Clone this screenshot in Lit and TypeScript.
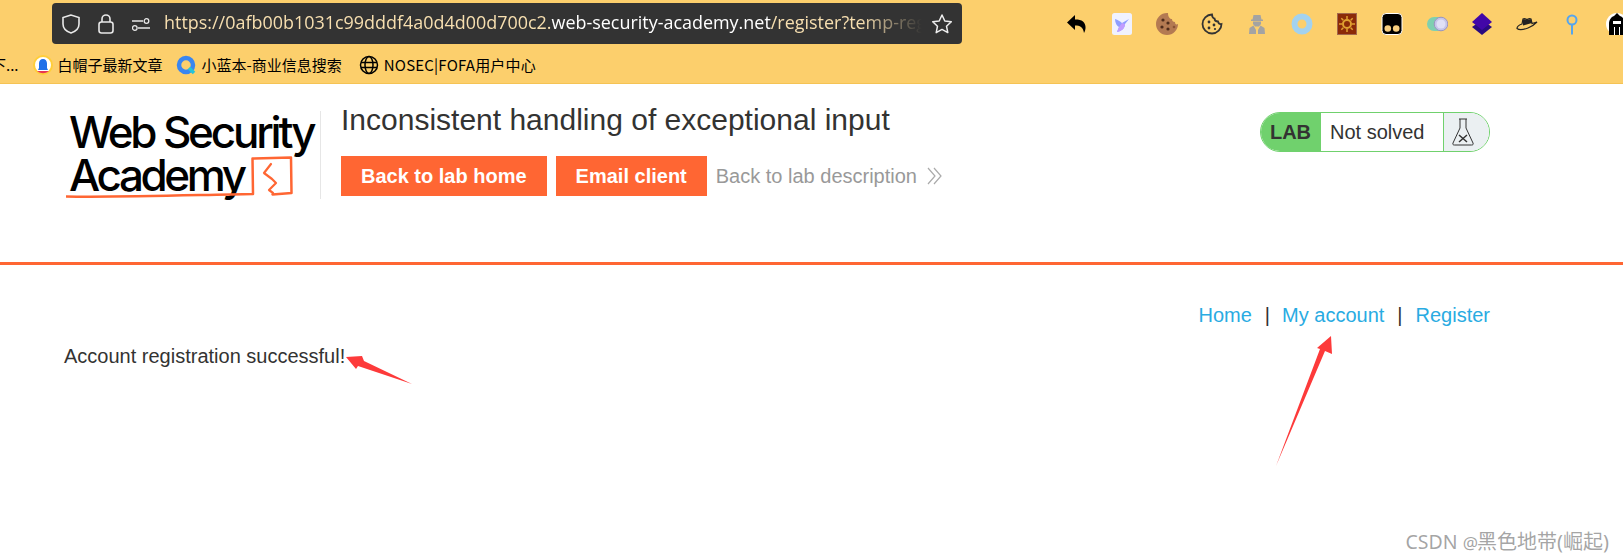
import { LitElement, html, css, svg } from "lit";
import { customElement } from "lit/decorators.js";

const extIcons = [
  svg`<path d="M9 2 1 9.500l8 7.500v-4.500c5 0 8 1.500 9 7.500 2-3 2.500-8.500-1-11.500-2-1.500-4-2-8-2z" fill="#000"/>`,
  svg`<rect x="1" y="0" width="20" height="22" rx="2.500" fill="#f0f2fe"/><path d="M4 6c3 1 5 2 7 4l7-4-4 5c0 4-3 7-8 8l2-5c-2-1-4-4-4-8z" fill="#8e9dff"/><path d="M11 10l3 1c0 4-3 7-8 8l2-5z" fill="#c09cff"/>`,
  svg`<path d="M11 0a11 11 0 1 0 11 11c-2 1-3 0-3-2-2 0-3-1-3-3-2 0-4-2-4-6z" fill="#b47a52"/><circle cx="7" cy="7" r="1.600" fill="#4f2c1b"/><circle cx="12" cy="10" r="1.600" fill="#4f2c1b"/><circle cx="6" cy="14" r="1.600" fill="#4f2c1b"/><circle cx="12" cy="16" r="1.600" fill="#4f2c1b"/><circle cx="18" cy="14" r="1.300" fill="#8a5434"/>`,
  svg`<path d="M11 1.500a9.500 9.500 0 1 0 9.500 9.500c-2 .5-3-.5-3.500-2.500-2 0-3.500-1-3.500-3-1.500-.5-2.500-2-2.500-4z" fill="none" stroke="#333" stroke-width="1.800"/><circle cx="8" cy="9" r="1.400" fill="#333"/><circle cx="13" cy="12" r="1.400" fill="#333"/><circle cx="8" cy="15" r="1.400" fill="#333"/><circle cx="14" cy="16" r="1.100" fill="#333"/>`,
  svg`<path d="M7.500 2h7l1 4.500H17V8H5V6.500h1.500zM7 8.500h8V11l-2 2.500H9L7 11zM3 21l.5-6 4-2.500L10 17v4zM19 21l-.5-6-4-2.500L12 17v4z" fill="#a3a3a3"/>`,
  svg`<circle cx="11" cy="11" r="7.500" fill="none" stroke="#a3d2ef" stroke-width="6"/>`,
  svg`<rect x="1.500" y="0.500" width="19" height="21" fill="#8c2a08" stroke="#a2674d"/><circle cx="11" cy="11" r="4" fill="none" stroke="#e0a030" stroke-width="2"/><path d="M11 3v3M11 16v3M3 11h3M16 11h3M5.300 5.300l2 2M14.700 14.700l2 2M16.700 5.300l-2 2M7.300 14.700l-2 2" stroke="#e0a030" stroke-width="1.500"/>`,
  svg`<rect x="1" y="0.500" width="20" height="21" rx="4" fill="#000" stroke="#fff"/><circle cx="6.800" cy="15.500" r="3.300" fill="#f8cf80"/><circle cx="15.200" cy="15.500" r="3.300" fill="#f8cf80"/>`,
  svg`<rect x="1" y="4" width="20" height="14" rx="7" fill="#7fd0b0"/><circle cx="15" cy="11" r="6.800" fill="#c5c5ea" stroke="#9c95bf"/><circle cx="15" cy="11" r="4.500" fill="#e0e0f6"/>`,
  svg`<path d="M11 7 21 14l-10 8-10-8z" fill="#2a0a80"/><path d="M11 0 21 9l-10 8L1 9z" fill="#4207a8"/>`,
  svg`<path d="M1 15.500c3 2.500 7 1 11-.5 3-1 6-3 9-6l-5 1.500-1-4.500c-2-1-3 .5-4 .5s-2-1.500-4-.5L6 11c-3 1-5 3-5 4.500z" fill="none" stroke="#222" stroke-width="1.200"/><path d="M7 6.500c2-1 3 .5 4 .5s2-1.500 4-.5l1 3.500-9 2.500z" fill="#222"/>`,
  svg`<circle cx="11" cy="7" r="4.500" fill="none" stroke="#55a5ee" stroke-width="2"/><rect x="10" y="11.500" width="2" height="10" fill="#55a5ee"/>`,
  svg`<circle cx="11" cy="11" r="11" fill="#fff"/><path d="M11 0l3 3c3 1 5 4 5 8v11H3V11c0-4 2-7 5-8z" fill="#000"/><path d="M7 8h8v3H7z" fill="#fff"/><path d="M8 14h1v8H8zM13 14h1v8h-1z" fill="#fff"/>`,
];

@customElement("app-root")
export class AppRoot extends LitElement {
  static styles = css`
    :host {
      display: block;
      position: relative;
      width: 1623px;
      height: 560px;
      overflow: hidden;
      background: #fff;
      font-family: "Liberation Sans", Arial, sans-serif;
      color: #333332;
    }
    .chrome {
      height: 84px;
      background: #fccf6c;
      border-bottom: 1px solid #f5c354;
      box-sizing: border-box;
      display: flex;
      flex-direction: column;
    }
    .top {
      height: 50px;
      display: flex;
      align-items: flex-start;
      padding: 3px 0 0 52px;
      box-sizing: border-box;
    }
    .url {
      width: 910px;
      height: 41px;
      background: #333333;
      border-radius: 4px;
      display: flex;
      align-items: center;
      box-sizing: border-box;
      padding-left: 9px;
      flex: none;
    }
    .url svg { flex: none; }
    .sec { display: flex; align-items: center; margin-right: 14px; }
    .sec svg + svg { margin-left: 16px; }
    .sec svg + svg + svg { margin-left: 17px; }
    .addr {
      font-family: "Open Sans", "Noto Sans", sans-serif;
      font-size: 17.950px;
      line-height: 38px;
      height: 41px;
      white-space: nowrap;
      overflow: hidden;
      width: 758px;
      color: #f7dfb0;
      -webkit-mask-image: linear-gradient(90deg, #000 92%, transparent 100%);
      mask-image: linear-gradient(90deg, #000 92%, transparent 100%);
    }
    .addr b { font-weight: 400; color: #fff; }
    .star { margin-left: 9px; }
    .exts {
      display: flex;
      gap: 23px;
      margin-left: 104px;
      margin-top: 10px;
      flex: none;
    }
    .exts svg { display: block; flex: none; }
    .marks {
      display: flex;
      align-items: center;
      height: 29px;
      font-family: "Noto Sans CJK SC", "Noto Sans", sans-serif;
      font-size: 15px;
      color: #000;
      white-space: nowrap;
      margin-left: -9px;
    }
    .mark { display: flex; align-items: center; gap: 5px; margin-right: 13px; }
    .mark svg { flex: none; }
    .m0 { margin-right: 14px; }
    .m2 { gap: 6px; margin-right: 17px; }
    .latin { letter-spacing: 0.200px; }
    .head {
      height: 181px;
      box-sizing: border-box;
      border-bottom: 3px solid #ff6633;
      display: flex;
      padding: 27px 133px 0 66px;
    }
    .logo {
      width: 255px;
      height: 88px;
      border-right: 1px solid #e6e6e6;
      position: relative;
      color: #000;
      flex: none;
      box-sizing: border-box;
      line-height: 1;
      font-family: "Inter", "Liberation Sans", sans-serif;
      font-weight: 450;
    }
    .logo .l1, .logo .l2 { display: block; white-space: nowrap; font-size: 44px; }
    .logo .l1 { letter-spacing: -3.200px; margin-left: 3px; height: 43px; line-height: 43px; }
    .logo .l2 { letter-spacing: -3.400px; margin-left: 3px; height: 43px; line-height: 43px; }
    .logo svg { position: absolute; left: 0; top: 0; }
    .titles { margin-left: 20px; }
    h2 {
      margin: -8px 0 0;
      font-size: 30px;
      font-weight: 400;
      line-height: 34px;
      white-space: nowrap;
      color: #333332;
    }
    .btns { display: flex; align-items: center; margin-top: 19px; }
    .btn {
      height: 40px;
      line-height: 40px;
      background: #ff6633;
      color: #fff;
      font-weight: 700;
      font-size: 20px;
      padding: 0 20px;
      margin-right: 9px;
      white-space: nowrap;
    }
    .back { color: #999; font-size: 20px; white-space: nowrap; display: flex; align-items: center; gap: 10px; }
    .lab {
      margin-left: auto;
      margin-top: 1px;
      width: 230px;
      height: 40px;
      box-sizing: border-box;
      border: 1px solid #70d16d;
      border-radius: 20px;
      display: flex;
      overflow: hidden;
      font-size: 20px;
      flex: none;
    }
    .lab .tag {
      width: 60px;
      background: #70d16d;
      font-weight: 700;
      text-align: center;
      line-height: 38px;
      flex: none;
      box-sizing: border-box;
      padding-right: 1px;
      color: #333332;
    }
    .lab .st {
      flex: 1;
      line-height: 38px;
      padding-left: 9px;
      border-right: 1px solid #70d16d;
    }
    .lab .ic {
      width: 45px;
      background: #ebf0f2;
      display: flex;
      align-items: center;
      padding-left: 7px;
      box-sizing: border-box;
    }
    .body { padding: 0 133px 0 64px; font-size: 20px; }
    .nav {
      display: flex;
      justify-content: flex-end;
      gap: 13px;
      padding-top: 39px;
      line-height: 23px;
    }
    .nav a { color: #29abe2; }
    .tight { margin-right: -1px; }
    .msg { margin: 18px 0 0; line-height: 23px; }
    .over { position: absolute; left: 0; top: 0; pointer-events: none; }
    .wm {
      position: absolute;
      right: 14px;
      top: 526px;
      font-family: "Noto Sans", "Noto Sans CJK SC", sans-serif;
      font-size: 19.500px;
      color: rgba(125, 125, 125, 0.7);
      white-space: nowrap;
    }
    .wm .at { font-size: 17px; letter-spacing: -1px; }
    .wm .cjk { font-size: 20px; }
  `;

  render() {
    return html`
      <div class="chrome">
        <div class="top">
          <div class="url">
            <div class="sec">
              <svg width="20" height="22" viewBox="0 0 20 22"><path d="M10 2 2 4.500V11c0 4.500 3.500 7.500 8 9 4.500-1.500 8-4.500 8-9V4.500z" fill="none" stroke="#e8e8e8" stroke-width="1.600"/></svg>
              <svg width="18" height="22" viewBox="0 0 18 22"><rect x="2" y="9" width="14" height="11" rx="2.500" fill="none" stroke="#e8e8e8" stroke-width="1.600"/><path d="M5 9V6a4 4 0 0 1 8 0v3" fill="none" stroke="#e8e8e8" stroke-width="1.600"/></svg>
              <svg width="18" height="14" viewBox="0 0 18 14"><path d="M0 4h11M6 11h12" stroke="#e8e8e8" stroke-width="1.400"/><circle cx="14.500" cy="4" r="2.300" fill="none" stroke="#e8e8e8" stroke-width="1.300"/><circle cx="2.800" cy="11" r="2.300" fill="none" stroke="#e8e8e8" stroke-width="1.300"/></svg>
            </div>
            <div class="addr">https://0afb00b1031c99dddf4a0d4d00d700c2.<b>web-security-academy.net</b>/register?temp-registration-token=x</div>
            <svg class="star" width="22" height="22" viewBox="0 0 22 22"><path d="M11 2l2.800 6 6.500.8-4.800 4.400 1.300 6.400L11 16.400 5.200 19.600l1.300-6.400L1.700 8.800 8.200 8z" fill="none" stroke="#eee" stroke-width="1.500" stroke-linejoin="round"/></svg>
          </div>
          <div class="exts">
            ${extIcons.map(
              (i) => html`<svg width="22" height="22" viewBox="0 0 22 22">${i}</svg>`
            )}
          </div>
        </div>
        <div class="marks">
          <div class="mark m0"><span>下...</span></div>
          <div class="mark">
            <svg width="20" height="20" viewBox="0 0 20 20"><circle cx="10" cy="10" r="9" fill="#fff" stroke="#ffce3a" stroke-width="2"/><path d="M4 16a9 9 0 0 0 12 0z" fill="#e8354f"/><path d="M10 4c2.500 0 4 2 4 4.500V13l1 2H5l1-2V8.500C6 6 7.500 4 10 4z" fill="#1e6fe8"/></svg>
            <span>白帽子最新文章</span>
          </div>
          <div class="mark m2">
            <svg width="20" height="20" viewBox="0 0 20 20"><circle cx="10" cy="10" r="7" fill="none" stroke="#3a86f0" stroke-width="4.500"/><path d="M13 13l5 5" stroke="#25c4d8" stroke-width="3.500"/></svg>
            <span>小蓝本-商业信息搜索</span>
          </div>
          <div class="mark">
            <svg width="20" height="20" viewBox="0 0 20 20" fill="none" stroke="#000" stroke-width="1.500"><circle cx="10" cy="10" r="8.500"/><ellipse cx="10" cy="10" rx="4" ry="8.500"/><path d="M2 7.500h16M2 12.500h16"/></svg>
            <span class="latin">NOSEC|FOFA用户中心</span>
          </div>
        </div>
      </div>

      <div class="head">
        <div class="logo">
          <span class="l1">Web Security</span>
          <span class="l2">Academy</span>
          <svg width="254" height="90" viewBox="0 0 254 90" fill="none" stroke="#ff6633" stroke-linecap="round" stroke-linejoin="round">
            <path d="M0 85.500c50 1 110-1 187-2.500l-.5-35.500 38.500-1 .5 35.500-19 1.500" stroke-width="2.500"/>
            <path d="M205 53l-7 9 8 6 4 4-7 7 4 3" stroke-width="2.200"/>
          </svg>
        </div>
        <div class="titles">
          <h2>Inconsistent handling of exceptional input</h2>
          <div class="btns">
            <div class="btn">Back to lab home</div>
            <div class="btn">Email client</div>
            <div class="back">
              <span>Back to lab description</span>
              <svg width="16" height="18" viewBox="0 0 16 18" fill="none" stroke="#aaa" stroke-width="1.200"><path d="M1 1l7 8-7 8M7 1l7 8-7 8"/></svg>
            </div>
          </div>
        </div>
        <div class="lab">
          <div class="tag">LAB</div>
          <div class="st">Not solved</div>
          <div class="ic">
            <svg width="24" height="32" viewBox="0 0 24 32" fill="none" stroke="#333" stroke-width="1"><path d="M8 3h8M9 3v9L2 27c-.5 1.500 0 2 1.500 2h17c1.500 0 2-.5 1.500-2L15 12V3"/><path d="M8 19l8 7M16 19l-8 7" stroke-width="1.500"/></svg>
          </div>
        </div>
      </div>

      <div class="body">
        <div class="nav">
          <a>Home</a><span class="tight">|</span><a>My account</a><span>|</span><a>Register</a>
        </div>
        <p class="msg">Account registration successful!</p>
      </div>

      <svg class="over" width="1623" height="560" viewBox="0 0 1623 560" fill="#fd3a3a">
        <path d="M346 357 362 356 364 361 412 384 358 366 356 369z"/>
        <path d="M1331 336 1332 354 1325 351 1276 466 1320 349 1317 348z"/>
      </svg>
      <div class="wm">CSDN <span class="at">@</span><span class="cjk">黑色地带(崛起)</span></div>
    `;
  }
}
